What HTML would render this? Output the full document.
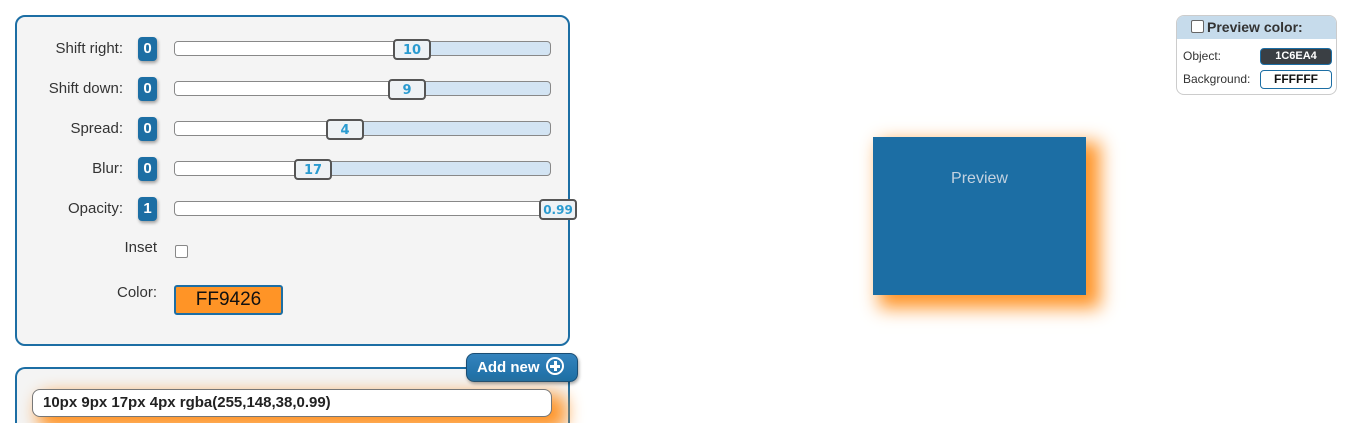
<!DOCTYPE html>
<html style="width:1354px;height:423px;overflow:hidden"><head><style>
body{margin:0;width:1354px;height:423px;background:#fff;font-family:"Liberation Sans",sans-serif;position:relative;overflow:hidden}
.a{position:absolute}
.p1{left:15px;top:15px;border:2px solid #1c6ea4;border-radius:10px;background:#f4f4f4;box-sizing:border-box;width:555px;height:331px}
.lab{position:absolute;font-size:15px;color:#333;text-align:right;white-space:nowrap}
.bd{position:absolute;left:138px;width:19px;height:24px;background:#1c6ea4;border-radius:4px;color:#fff;font-size:15px;font-weight:bold;text-align:center;line-height:24px;box-shadow:1px 2px 3px rgba(0,0,0,.35)}
.tr{position:absolute;left:174px;width:377px;height:15px;border:1px solid #888;border-radius:4px;background:#d3e4f3;box-sizing:border-box;overflow:hidden}
.tr i{position:absolute;left:0;top:0;bottom:0;background:#fff}
.hd{position:absolute;width:38px;height:21px;border:2px solid #555;border-radius:4px;background:#eef2f5;box-sizing:border-box;color:#2a9bd0;font-weight:bold;font-size:13px;text-align:center;line-height:19px;font-family:"DejaVu Sans",sans-serif}
</style></head><body>
<div class="a p1"></div>
<div class="lab" style="top:40px;left:0;width:123px">Shift right:</div>
<div class="lab" style="top:80px;left:0;width:123px">Shift down:</div>
<div class="lab" style="top:120px;left:0;width:123px">Spread:</div>
<div class="lab" style="top:160px;left:0;width:123px">Blur:</div>
<div class="lab" style="top:200px;left:0;width:123px">Opacity:</div>
<div class="lab" style="top:239px;left:0;width:157px">Inset</div>
<div class="lab" style="top:284px;left:0;width:157px">Color:</div>
<div class="bd" style="top:37px">0</div>
<div class="bd" style="top:77px">0</div>
<div class="bd" style="top:117px">0</div>
<div class="bd" style="top:157px">0</div>
<div class="bd" style="top:197px">1</div>
<div class="tr" style="top:41px"><i style="width:222px"></i></div>
<div class="tr" style="top:81px"><i style="width:217px"></i></div>
<div class="tr" style="top:121px"><i style="width:155px"></i></div>
<div class="tr" style="top:161px"><i style="width:123px"></i></div>
<div class="tr" style="top:201px;background:#fff"></div>
<div class="hd" style="left:393px;top:39px">10</div>
<div class="hd" style="left:388px;top:79px">9</div>
<div class="hd" style="left:326px;top:119px">4</div>
<div class="hd" style="left:294px;top:159px">17</div>
<div class="hd" style="left:539px;top:199px;font-size:12px">0.99</div>
<div class="a" style="left:175px;top:245px;width:11px;height:11px;border:1px solid #888;border-radius:2px;background:#fff"></div>
<div class="a" style="left:174px;top:285px;width:109px;height:30px;border:2px solid #1c6ea4;border-radius:3px;background:#ff9426;box-sizing:border-box;text-align:center;font-size:19px;line-height:26px;color:#111">FF9426</div>
<div class="a" style="left:15px;top:367px;width:555px;height:56px;border:2px solid #1c6ea4;border-bottom:none;border-radius:10px 10px 0 0;background:#f4f4f4;box-sizing:border-box"></div>
<div class="a" style="left:466px;top:353px;width:112px;height:29px;border:1px solid #1a4d73;border-radius:8px;background:linear-gradient(#3483bd,#1c6ea4);box-sizing:border-box;color:#fff;font-weight:bold;font-size:15px;line-height:27px;padding-left:10px;box-shadow:1px 2px 3px rgba(0,0,0,.35)">Add new<span style="position:absolute;left:79px;top:3px;width:18px;height:18px;border:2px solid #fff;border-radius:50%;box-sizing:border-box"><span style="position:absolute;left:6px;top:2px;width:3px;height:10px;background:#fff"></span><span style="position:absolute;left:2px;top:6px;width:10px;height:3px;background:#fff"></span></span></div>
<div class="a" style="left:32px;top:389px;width:520px;height:28px;border:1px solid #777;border-radius:8px;background:#fff;box-sizing:border-box;font-weight:bold;font-size:15px;line-height:26px;padding-left:10px;color:#222;box-shadow:10px 9px 17px 4px rgba(255,148,38,.99)">10px 9px 17px 4px rgba(255,148,38,0.99)</div>
<div class="a" style="left:873px;top:137px;width:213px;height:158px;background:#1c6ea4;box-shadow:10px 9px 17px 4px rgba(255,148,38,.99);color:#c3d2e0;font-size:16px;text-align:center;line-height:84px">Preview</div>
<div class="a" style="left:1176px;top:15px;width:161px;height:80px;border:1px solid #ccc;border-radius:8px;background:#fff;box-sizing:border-box;overflow:hidden">
<div style="height:23px;background:#c6dbeb;font-weight:bold;font-size:14px;color:#333;line-height:22px;padding-left:14px;position:relative"><span style="position:absolute;left:14px;top:4px;width:11px;height:11px;border:1px solid #666;border-radius:2px;background:#fff"></span><span style="margin-left:16px">Preview color:</span></div>
<div style="position:absolute;left:6px;top:33px;font-size:12px;color:#333">Object:</div>
<div style="position:absolute;left:6px;top:56px;font-size:12px;color:#333">Background:</div>
<div style="position:absolute;left:83px;top:32px;width:70px;height:15px;background:#3a3f44;border:1px solid #1c6ea4;border-radius:4px;color:#fff;font-size:11px;text-align:center;line-height:15px;font-weight:bold">1C6EA4</div>
<div style="position:absolute;left:83px;top:54px;width:70px;height:17px;background:#fff;border:1px solid #1c6ea4;border-radius:4px;color:#111;font-size:12px;text-align:center;line-height:17px;font-weight:bold">FFFFFF</div>
</div>
</body></html>
